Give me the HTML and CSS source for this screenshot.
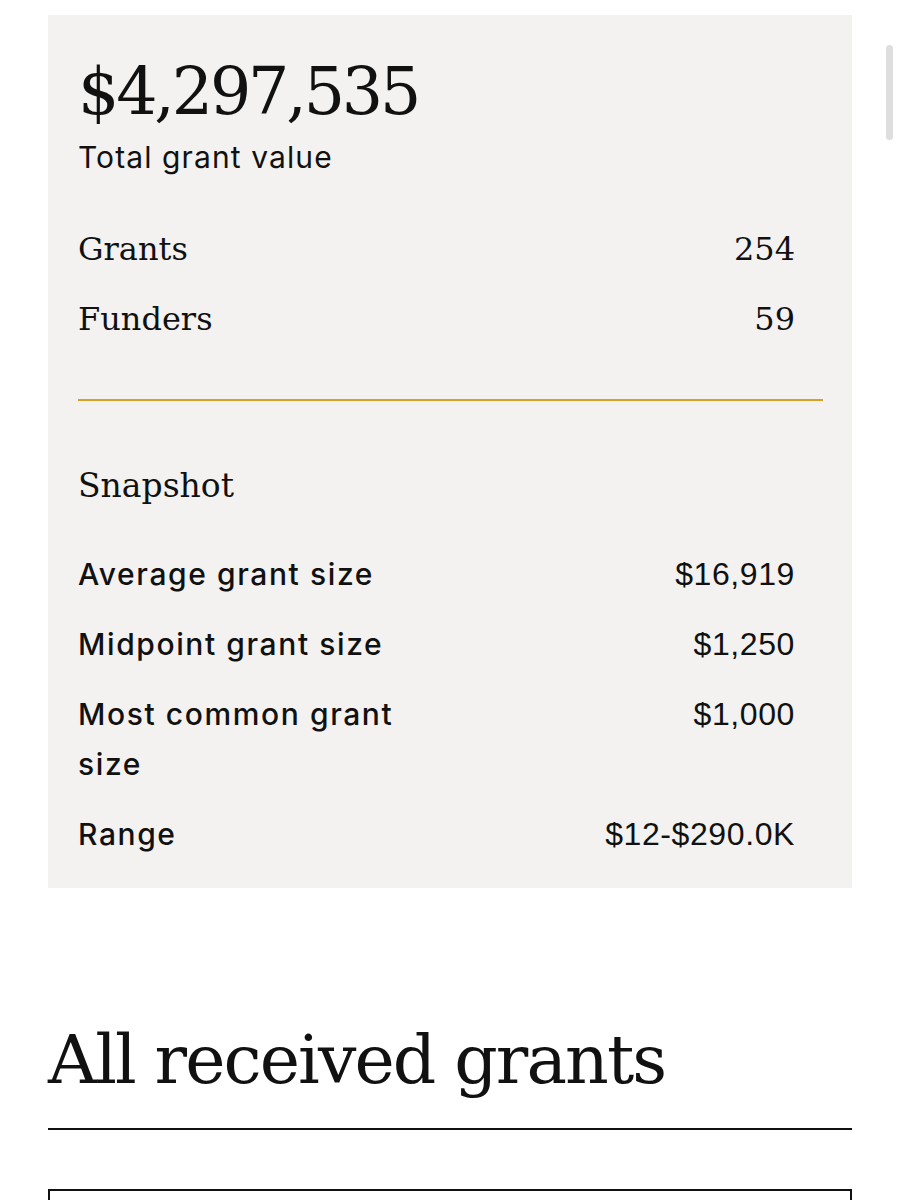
FILE: index.html
```html
<!DOCTYPE html>
<html lang="en">
<head>
    <meta charset="UTF-8">
    <title>Grants received</title>
    <link rel="stylesheet" href="styles.css">
</head>
<body>
<div class="page">
    <div class="summary">
        <div class="total">$4,297,535</div>
        <div class="total-label">Total grant value</div>
        <ul class="counts">
            <li><span class="label">Grants</span><span class="value">254</span></li>
            <li><span class="label">Funders</span><span class="value">59</span></li>
        </ul>
        <div class="divider"></div>
        <h3 class="snapshot-title">Snapshot</h3>
        <ul class="snapshot">
            <li><span class="label">Average grant size</span><span class="value">$16,919</span></li>
            <li><span class="label">Midpoint grant size</span><span class="value">$1,250</span></li>
            <li><span class="label">Most common grant size</span><span class="value">$1,000</span></li>
            <li><span class="label">Range</span><span class="value">$12-$290.0K</span></li>
        </ul>
    </div>

    <h2 class="section-title">All received grants</h2>
    <div class="grants-list"></div>
</div>
<div class="scrollbar"></div>
</body>
</html>
```

FILE: styles.css
```css
* {
    margin: 0;
    padding: 0;
}

body {
    background-color: #fff;
    color: #111;
    font-family: "Inter", "Liberation Sans", sans-serif;
}

ul {
    list-style: none;
}

.page {
    padding: 15px 49px 0 48px;
}

.summary {
    background-color: #f3f2f0;
    padding: 41px 29px 29px 30px;
}

.total {
    font-family: "DejaVu Serif", serif;
    font-size: 65px;
    line-height: 72px;
    letter-spacing: -3.2px;
}

.total-label {
    margin-top: 9px;
    font-size: 30px;
    line-height: 40px;
    letter-spacing: 1.1px;
}

.counts {
    margin-top: 47px;
    font-family: "DejaVu Serif", serif;
    font-size: 32px;
}

.counts li,
.snapshot li {
    display: flex;
    justify-content: space-between;
    align-items: baseline;
    line-height: 50px;
    padding-right: 28px;
}

.counts li + li,
.snapshot li + li {
    margin-top: 20px;
}

.divider {
    margin-top: 55px;
    height: 2px;
    background-color: #d5a126;
}

.snapshot-title {
    margin-top: 60px;
    font-family: "DejaVu Serif", serif;
    font-size: 33px;
    font-weight: normal;
    line-height: 50px;
}

.snapshot {
    margin-top: 38px;
}

.snapshot .label {
    max-width: 50%;
    font-size: 30px;
    font-weight: 500;
    letter-spacing: 1.6px;
}

.snapshot .value {
    font-family: "Liberation Sans", sans-serif;
    font-size: 32px;
    letter-spacing: 0.6px;
}

.section-title {
    margin-top: 132px;
    padding-bottom: 28px;
    border-bottom: 2px solid #111;
    font-family: "DejaVu Serif", serif;
    font-size: 68px;
    font-weight: normal;
    line-height: 80px;
    letter-spacing: -1.9px;
}

.grants-list {
    margin-top: 59px;
    height: 200px;
    border: 2px solid #111;
}

/* overlay scroll indicator from the mobile screenshot */
.scrollbar {
    position: fixed;
    top: 45px;
    left: 886px;
    width: 7px;
    height: 95px;
    border-radius: 4px;
    background-color: #dedede;
}
```
